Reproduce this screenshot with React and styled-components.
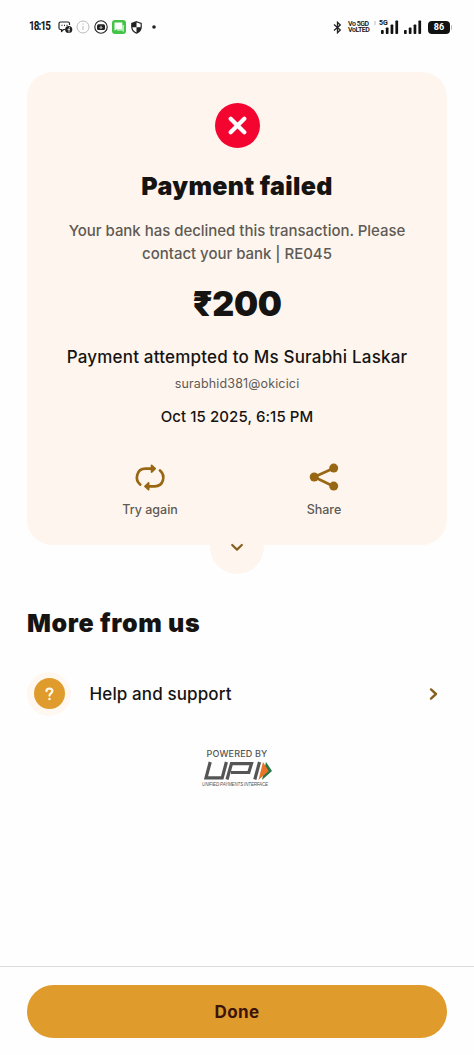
import React from 'react';
import styled, { createGlobalStyle } from 'styled-components';

const GlobalStyle = createGlobalStyle`
  * { box-sizing: border-box; }
  body { margin: 0; background: #fefefe; font-family: Inter, "Noto Sans", sans-serif; color: #161412; }
`;

const Screen = styled.div`
  display: flex;
  flex-direction: column;
  height: 1055px;
  width: 474px;
  overflow: hidden;
`;

const StatusBar = styled.header`
  display: flex;
  align-items: center;
  justify-content: space-between;
  height: 54px;
  padding: 0 22px 0 29px;
`;

const StatusGroup = styled.div`
  display: flex;
  align-items: center;
`;

const Clock = styled.span`
  width: 21px;
  margin-right: 8px;
  font: 700 11px/14px Roboto, sans-serif;
  letter-spacing: -1px;
  white-space: nowrap;
  transform: scale(0.9, 1.08);
  transform-origin: left center;
`;

const StatusIcon = styled.svg`
  display: block;
  flex: none;
  margin-left: ${(p) => p.$gap || 0}px;
`;

const VolteLabel = styled.div`
  display: flex;
  flex-direction: column;
  width: 22px;
  margin-left: 6px;
  font: 600 7px/6.5px Roboto, sans-serif;
  letter-spacing: -0.45px;
  white-space: nowrap;
`;

const Battery = styled.div`
  display: flex;
  align-items: center;
  justify-content: center;
  width: 22px;
  height: 13px;
  margin-left: 6px;
  border-radius: 4px;
  background: #111;
  color: #fff;
  font: 700 9px/13px Roboto, sans-serif;
`;

const BatteryTip = styled.i`
  width: 1.5px;
  height: 5px;
  margin-left: 0.5px;
  border-radius: 0 2px 2px 0;
  background: #b5b5b5;
`;

const Card = styled.section`
  position: relative;
  display: flex;
  flex-direction: column;
  align-items: center;
  height: 473px;
  margin: 18px 27px 0;
  padding-top: 31px;
  border-radius: 25px;
  background: #fef6ee;
  text-align: center;
`;

const FailBadge = styled.div`
  display: grid;
  place-items: center;
  width: 45px;
  height: 45px;
  border-radius: 50%;
  background: #f3052f;
`;

const Heading = styled.h1`
  margin: 21px 0 0;
  font-size: 25px;
  font-weight: 900;
  line-height: 34px;
  letter-spacing: 0.3px;
  white-space: nowrap;
`;

const Reason = styled.p`
  margin: 17px 0 0;
  color: #5f5a55;
  font-size: 15px;
  font-weight: 450;
  line-height: 22.5px;
  letter-spacing: -0.03px;
  white-space: nowrap;
`;

const Amount = styled.div`
  margin-top: 18.5px;
  font-size: 34px;
  font-weight: 900;
  line-height: 40px;
  letter-spacing: -0.4px;
`;

const Payee = styled.div`
  margin-top: 21.2px;
  font-size: 17px;
  font-weight: 500;
  line-height: 24px;
  letter-spacing: 0.2px;
  white-space: nowrap;
`;

const Vpa = styled.div`
  margin-top: 6.3px;
  color: #5f5a55;
  font-size: 12.5px;
  line-height: 18px;
  letter-spacing: 0.15px;
`;

const DateLine = styled.div`
  margin-top: 12.7px;
  font-size: 15px;
  font-weight: 500;
  line-height: 22px;
  letter-spacing: 0.08px;
`;

const Actions = styled.div`
  display: grid;
  grid-template-columns: 1fr 1fr;
  width: 348px;
  margin-top: 34.3px;
`;

const ActionButton = styled.button`
  display: flex;
  flex-direction: column;
  align-items: center;
  gap: 8px;
  padding: 0;
  border: 0;
  background: none;
  color: #5f5a55;
  font: 500 12.5px/20px Inter, sans-serif;
  letter-spacing: 0;
`;

const Expander = styled.button`
  position: absolute;
  left: 183px;
  top: 448px;
  display: grid;
  place-items: center;
  width: 54px;
  height: 54px;
  padding: 0;
  border: 0;
  border-radius: 50%;
  background: #fef6ee;
`;

const SectionTitle = styled.h2`
  margin: 61px 27px 0;
  font-size: 25px;
  font-weight: 900;
  line-height: 34px;
  letter-spacing: 0.65px;
  white-space: nowrap;
`;

const SupportRow = styled.a`
  display: flex;
  align-items: center;
  height: 44px;
  margin: 31.5px 27px 0;
  font-size: 17px;
  font-weight: 500;
`;

const HelpHalo = styled.div`
  display: grid;
  place-items: center;
  width: 44px;
  height: 44px;
  margin-right: 18.5px;
  border-radius: 50%;
  background: #fef8f1;
`;

const HelpDot = styled.div`
  display: grid;
  place-items: center;
  width: 31px;
  height: 31px;
  border-radius: 50%;
  background: #e09b2d;
`;

const SupportLabel = styled.span`
  flex: 1;
  letter-spacing: 0.12px;
`;

const Powered = styled.div`
  display: flex;
  flex-direction: column;
  align-items: center;
  margin-top: 31px;
  color: #555;
  font-size: 9px;
  font-weight: 500;
  letter-spacing: 0.15px;
  line-height: 14px;
`;

const UpiTagline = styled.span`
  margin: 0 4px 0 0;
  font: italic 400 4.5px/8px "Liberation Sans", sans-serif;
  letter-spacing: -0.15px;
  white-space: nowrap;
`;

const Footer = styled.footer`
  height: 89px;
  margin-top: auto;
  padding: 18px 27px 0;
  border-top: 1px solid #dcdcdc;
`;

const DoneButton = styled.button`
  display: block;
  width: 100%;
  height: 53px;
  padding: 0;
  border: 0;
  border-radius: 27px;
  background: #e09b2d;
  color: #3c1408;
  font: 700 17px/54px Inter, sans-serif;
  letter-spacing: 0.35px;
`;

function SignalBars({ gap, tag }) {
  return (
    <StatusIcon $gap={gap} width={tag ? 25 : 18} height="16" viewBox={tag ? '-7 0 25 16' : '0 0 18 16'} fill="#111">
      {tag && <text x="-2" y="6" fontFamily="Roboto" fontWeight="700" fontSize="7">5G</text>}
      {tag && <path d="M-7 3h2M-7 5h2" stroke="#bbb" strokeWidth="1" />}
      <rect x="0" y="11" width="2.7" height="4" rx=".8" />
      <rect x="4.8" y="8.5" width="2.7" height="6.5" rx=".8" />
      <rect x="9.6" y="5.5" width="2.7" height="9.5" rx=".8" />
      <rect x="14.4" y="1.5" width="2.7" height="13.5" rx=".8" />
    </StatusIcon>
  );
}

function UpiLogo() {
  return (
    <svg width="70" height="20" viewBox="0 0 70 20" fill="none">
      <g stroke="#555" strokeWidth="3.2" strokeLinejoin="miter">
        <path d="M8.2 1 4 16.8H20.2L24.4 1" />
        <path d="M25 18.5 29.5 2.6H49.5L46.8 11.5H29" />
        <path d="M57.5 1 52.8 18.5" />
      </g>
      <path d="M64 1 70 10 60 19Z" fill="#287647" />
      <path d="M61 1 66.7 10 56.5 19Z" fill="#ea7328" />
    </svg>
  );
}

export default function App() {
  return (
    <Screen>
      <GlobalStyle />
      <StatusBar>
        <StatusGroup>
          <Clock>18:15</Clock>
          <StatusIcon width="15" height="14" viewBox="0 0 15 14" fill="none" stroke="#222" strokeWidth="1.2">
            <path d="M7 9.5H5.5L3.5 11.5V9.5H2.5Q1 9.5 1 8V3.5Q1 2 2.5 2H10Q11.5 2 11.5 3.5V5" strokeLinejoin="round" />
            <path d="M3.5 5.3h1M6 5.3h1M8.5 5.3h1" />
            <circle cx="10.7" cy="9.5" r="3.6" fill="#222" stroke="none" />
            <path d="M11 12.5V8.3q0-.8 1-.8M9.6 9.6h2.4" stroke="#fff" strokeWidth=".8" />
          </StatusIcon>
          <StatusIcon $gap={3} width="14" height="14" viewBox="0 0 14 14" fill="none" stroke="#bbb">
            <circle cx="7" cy="7" r="6" />
            <path d="M7 6v4M7 3.5v1.2" />
          </StatusIcon>
          <StatusIcon $gap={4} width="14" height="14" viewBox="0 0 14 14" fill="none" stroke="#222">
            <circle cx="7" cy="7" r="6.2" strokeWidth="1.1" />
            <rect x="3" y="4.3" width="8" height="5.6" rx="1.5" fill="#222" stroke="none" />
            <path d="M7 5.7v2.8M5.7 7.2 7 8.5 8.3 7.2" stroke="#fff" strokeWidth=".8" />
          </StatusIcon>
          <StatusIcon $gap={4} width="14" height="14" viewBox="0 0 14 14">
            <rect width="14" height="14" rx="3" fill="#43c447" />
            <path d="M10.3 5H12V12L9.9 10.7H5V9h5.3Z" fill="#b4ebb6" />
            <path d="M2.5 2.5H10.3V9H5L2.5 10.7Z" fill="#fff" />
          </StatusIcon>
          <StatusIcon $gap={5} width="11" height="13" viewBox="0 0 11 13">
            <path d="M5.5.7 10.2 2.4V6Q10.2 10.2 5.5 12.2.8 10.2.8 6V2.4Z" fill="#fff" stroke="#222" strokeWidth="1.2" />
            <path d="M5.5.7V6.3H.8V2.4ZM5.5 6.3h4.7Q9.9 10.2 5.5 12.2Z" fill="#222" />
          </StatusIcon>
          <StatusIcon $gap={10} width="4" height="4" viewBox="0 0 4 4">
            <circle cx="2" cy="2" r="1.8" fill="#222" />
          </StatusIcon>
        </StatusGroup>
        <StatusGroup>
          <StatusIcon width="9" height="13" viewBox="0 0 9 13" fill="none" stroke="#222" strokeWidth="1.3">
            <path d="M1 3.5 7.3 9 4.5 11.7V1.3L7.3 4 1 9.5" />
          </StatusIcon>
          <VolteLabel>
            <span>Vo 5GD</span>
            <span>VoLTED</span>
          </VolteLabel>
          <SignalBars tag gap={4} />
          <SignalBars gap={5} />
          <Battery>86</Battery>
          <BatteryTip />
        </StatusGroup>
      </StatusBar>

      <Card>
        <FailBadge>
          <svg width="19" height="19" viewBox="0 0 19 19" stroke="#fff" strokeWidth="4.2" strokeLinecap="round">
            <path d="M2.7 2.7 16.3 16.3M16.3 2.7 2.7 16.3" />
          </svg>
        </FailBadge>
        <Heading>Payment failed</Heading>
        <Reason>
          Your bank has declined this transaction. Please
          <br />
          contact your bank | RE045
        </Reason>
        <Amount>₹200</Amount>
        <Payee>Payment attempted to Ms Surabhi Laskar</Payee>
        <Vpa>surabhid381@okicici</Vpa>
        <DateLine>Oct 15 2025, 6:15 PM</DateLine>
        <Actions>
          <ActionButton>
            <svg width="32" height="30" viewBox="0 0 32 30" fill="none" stroke="#986714" strokeWidth="2.7" strokeLinecap="round" strokeLinejoin="round">
              <path d="M6.2 22.6C.6 17.6 2.2 6.9 11.5 6.7H19" />
              <path d="M26 8.4C31.6 13.4 30 24.1 20.7 24.3H13" />
              <path d="M17.6 3.4 21.2 6.7 17.6 10ZM14.6 21 11 24.3 14.6 27.6Z" fill="#986714" strokeWidth="1.8" />
            </svg>
            Try again
          </ActionButton>
          <ActionButton>
            <svg width="30" height="30" viewBox="0 0 30 30" fill="#986714" stroke="#986714">
              <path d="M24.5 6.2 5.2 15 24.5 24.2" fill="none" strokeWidth="2.7" />
              <g stroke="none">
                <circle cx="24.7" cy="6.1" r="4.5" />
                <circle cx="5.2" cy="15" r="4.5" />
                <circle cx="24.7" cy="24.1" r="4.5" />
              </g>
            </svg>
            Share
          </ActionButton>
        </Actions>
        <Expander aria-label="Show details">
          <svg width="14" height="10" viewBox="0 0 14 10" fill="none" stroke="#86601f" strokeWidth="2.2" strokeLinecap="round" strokeLinejoin="round">
            <path d="M2.2 3 7 7.6 11.8 3" />
          </svg>
        </Expander>
      </Card>

      <SectionTitle>More from us</SectionTitle>
      <SupportRow>
        <HelpHalo>
          <HelpDot>
            <svg width="9" height="14" viewBox="0 0 10 15" fill="none" stroke="#fff8e8" strokeWidth="2.5" strokeLinecap="round">
              <path d="M1.6 4.3C1.7.6 8.2.7 8.2 4.3 8.2 6.7 5 6.7 5 9.2" />
              <circle cx="5" cy="13" r="1.4" fill="#fff8e8" stroke="none" />
            </svg>
          </HelpDot>
        </HelpHalo>
        <SupportLabel>Help and support</SupportLabel>
        <svg width="27" height="14" viewBox="0 0 27 14" fill="none" stroke="#86601f" strokeWidth="2.4" strokeLinecap="round" strokeLinejoin="round">
          <path d="M11 2.4 16 7 11 11.6" />
        </svg>
      </SupportRow>

      <Powered>
        <span>POWERED BY</span>
        <UpiLogo />
        <UpiTagline>UNIFIED PAYMENTS INTERFACE</UpiTagline>
      </Powered>

      <Footer>
        <DoneButton>Done</DoneButton>
      </Footer>
    </Screen>
  );
}
